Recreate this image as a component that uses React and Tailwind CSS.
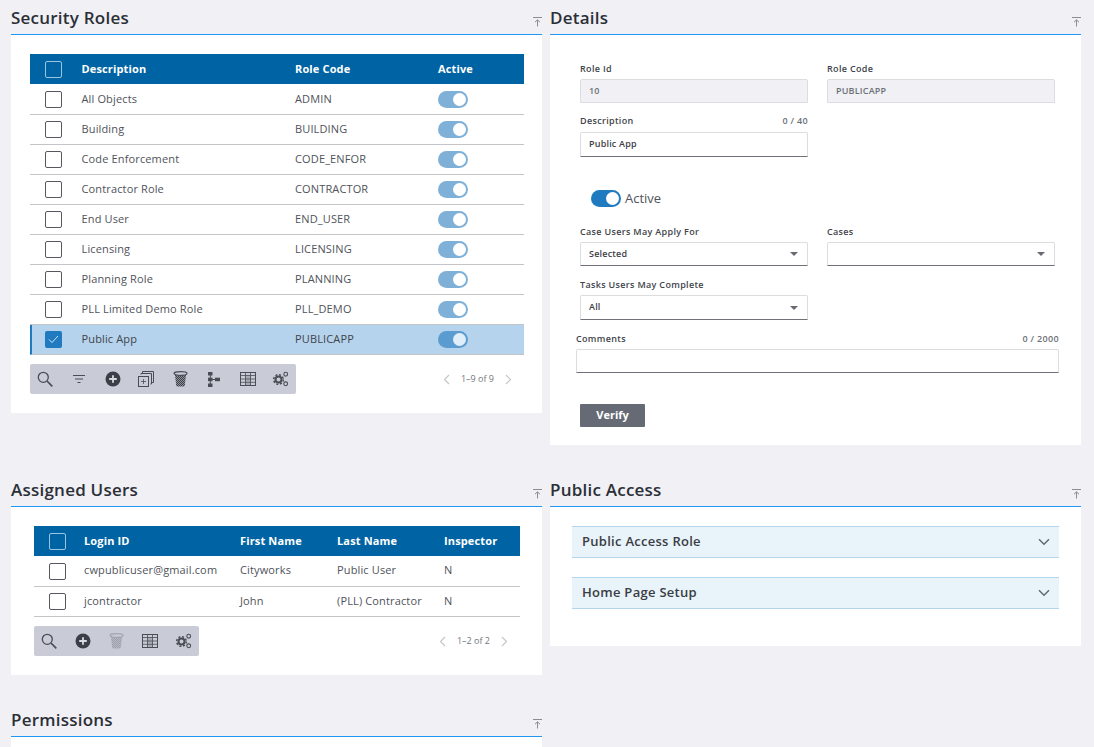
const roles = [
  ["All Objects", "ADMIN"],
  ["Building", "BUILDING"],
  ["Code Enforcement", "CODE_ENFOR"],
  ["Contractor Role", "CONTRACTOR"],
  ["End User", "END_USER"],
  ["Licensing", "LICENSING"],
  ["Planning Role", "PLANNING"],
  ["PLL Limited Demo Role", "PLL_DEMO"],
];
const users = [
  ["cwpublicuser@gmail.com", "Cityworks", "Public User", "N"],
  ["jcontractor", "John", "(PLL) Contractor", "N"],
];

const Collapse = () => (
  <svg width="9" height="10" viewBox="0 0 9 10" fill="none" stroke="#8a8d96" strokeWidth="1" className="mt-[9px]">
    <path d="M0 .5H9M4.5 9.5V3M2 5.2 4.5 2.8 7 5.2" />
  </svg>
);

function Panel({ title, children, className }) {
  return (
    <section className={className}>
      <div className="h-[35px] flex items-center justify-between border-b border-[#2196f3]">
        <h2 className="text-[17px] font-semibold tracking-[0.23px] text-[#2b2f36] leading-none pt-[1px]">{title}</h2>
        <Collapse />
      </div>
      {children}
    </section>
  );
}

function Box({ checked, header }) {
  if (checked)
    return (
      <span className="w-[17px] h-[17px] rounded-[2px] bg-[#1f7ac0] flex items-center justify-center">
        <svg width="11" height="9" viewBox="0 0 11 9" fill="none" stroke="#d5e8f6" strokeWidth="1"><path d="M1 4.5 4 7.5 10 1" /></svg>
      </span>
    );
  return (
    <span className={"w-[17px] h-[17px] rounded-[2px] border " + (header ? "border-[#9cc4e0]" : "border-[#55585f] bg-white")} />
  );
}

function Toggle({ tone = "off" }) {
  const track = tone === "on" ? "bg-[#1f7ac0]" : tone === "sel" ? "bg-[#5b9cd0]" : "bg-[#7fb1d8]";
  const knob = tone === "sel" ? "bg-[#dfeef8]" : "bg-white";
  return (
    <span className={"w-[30px] h-[17px] rounded-full flex items-center justify-end pr-[2px] " + track}>
      <span className={"w-[13px] h-[13px] rounded-full " + knob} />
    </span>
  );
}

const g = "#4a4d55";
const IconSearch = () => (
  <svg width="16" height="16" viewBox="0 0 16 16" fill="none" stroke={g}>
    <circle cx="6.3" cy="6.3" r="5" strokeWidth="1.3" /><path d="M10 10 15.3 15.3" strokeWidth="1.7" />
  </svg>
);
const IconFilter = () => (
  <svg width="12" height="10" viewBox="0 0 12 10" fill="none" stroke={g}>
    <path d="M0 1.5H12M2 5H10M4.5 8.5H7.5" />
  </svg>
);
const IconPlus = () => (
  <svg width="16" height="16" viewBox="0 0 16 16">
    <circle cx="8" cy="8" r="7.5" fill="#3c3f47" /><path d="M8 4.2V11.8M4.2 8H11.8" stroke="#d8dae0" strokeWidth="1.8" />
  </svg>
);
const IconCopy = () => (
  <svg width="16" height="16" viewBox="0 0 16 16" fill="none" stroke={g}>
    <path d="M4.5 2.5V.5H15.5V11.5H13.5" /><path d="M3 3.5V2.5H13.5V13H12.5" />
    <rect x=".5" y="5.5" width="10" height="10" /><path d="M5.5 8V13M3 10.5H8" strokeWidth=".8" />
  </svg>
);
const IconTrash = ({ faded }) => (
  <svg width="15" height="16" viewBox="0 0 15 16" opacity={faded ? 0.3 : 1}>
    <defs>
      <pattern id={faded ? "m2" : "m1"} width="2" height="2" patternUnits="userSpaceOnUse">
        <rect width="2" height="2" fill="#8d9098" /><rect width="1" height="1" fill="#3f4249" /><rect x="1" y="1" width="1" height="1" fill="#3f4249" />
      </pattern>
    </defs>
    <path d="M2 4H13L11.8 14.5Q11.6 15.5 10.5 15.5H4.5Q3.4 15.5 3.2 14.5Z" fill={`url(#${faded ? "m2" : "m1"})`} />
    <ellipse cx="7.5" cy="2.5" rx="6.5" ry="1.8" fill="#c9ccd6" stroke={g} strokeWidth="1.2" />
  </svg>
);
const IconTree = () => (
  <svg width="12" height="15" viewBox="0 0 12 15" fill={g}>
    <rect x="0" y="0" width="4.5" height="3.5" /><rect x="0" y="5.7" width="4.5" height="3.5" /><rect x="0" y="11.5" width="4.5" height="3.5" />
    <rect x="7" y="5.7" width="5" height="3.5" /><path d="M1.8 3H2.8V12H1.8ZM4 7H8V8H4Z" />
  </svg>
);
const IconGrid = () => (
  <svg width="16" height="14" viewBox="0 0 16 14" fill="none" stroke={g}>
    <rect x="5.5" y="3" width="5" height="10.5" fill="#a9acb5" stroke="none" />
    <rect x=".5" y=".5" width="15" height="13" /><path d="M.5 3.5H15.5M.5 7H15.5M.5 10.3H15.5M5.5 .5V13.5M10.5 .5V13.5" strokeWidth=".8" />
  </svg>
);
const IconGears = () => (
  <svg width="16" height="16" viewBox="0 0 16 16" fill="none" stroke={g}>
    <circle cx="5.5" cy="8.5" r="3" strokeWidth="2" />
    <circle cx="5.5" cy="8.5" r="4.8" strokeWidth="1.5" strokeDasharray="2 1.77" />
    <circle cx="12.7" cy="3.2" r="1.9" strokeWidth="1.1" />
    <circle cx="12.7" cy="12.8" r="1.9" strokeWidth="1.1" />
  </svg>
);

function Toolbar({ icons, className }) {
  return (
    <div className={"h-[30px] bg-[#c9ccd6] rounded-[2px] flex items-center pl-[7px] gap-[17.75px] " + className}>
      {icons.map((I, i) => (
        <span key={i} className="w-[16px] flex items-center justify-center">{I}</span>
      ))}
    </div>
  );
}

function Pager({ text }) {
  const c = "#c4c6cc";
  return (
    <div className="flex items-center gap-[11px] text-[9px] text-[#73767e]">
      <svg width="7" height="11" viewBox="0 0 7 11" fill="none" stroke={c} strokeWidth="1.2"><path d="M6 1 1.5 5.5 6 10" /></svg>
      <span>{text}</span>
      <svg width="7" height="11" viewBox="0 0 7 11" fill="none" stroke={c} strokeWidth="1.2"><path d="M1 1 5.5 5.5 1 10" /></svg>
    </div>
  );
}

function Label({ children, count, className = "" }) {
  return (
    <div className={"flex justify-between items-center h-[12px] text-[9px] font-semibold text-[#41444b] tracking-[0.33px] " + className}>
      <span>{children}</span>
      {count && <span className="font-semibold text-[#6d7077]">{count}</span>}
    </div>
  );
}

function Field({ value, disabled, select, tall, className = "" }) {
  return (
    <div className={"flex items-center justify-between px-[8px] rounded-t-[2px] border border-[#dcdde1] text-[9px] font-semibold tracking-[0.2px] " +
      (tall ? "h-[25px] " : "h-[24px] ") +
      (disabled ? "bg-[#f0f0f5] border-[#d2d3d8] text-[#6d7077] font-normal " : "bg-white border-b-[#6f7278] text-[#3d4047] ") + className}>
      <span className={tall ? "-mt-[2px]" : ""}>{value}</span>
      {select && <span className="mr-[1px] w-0 h-0 border-x-[4px] border-x-transparent border-t-[4px] border-t-[#666a72]" />}
    </div>
  );
}

function Chevron() {
  return (
    <svg width="12" height="8" viewBox="0 0 12 8" fill="none" stroke="#5f6a75" strokeWidth="1.5"><path d="M1 1.2 6 6.2 11 1.2" /></svg>
  );
}

export default function App() {
  return (
    <div className="h-[747px] overflow-hidden bg-[#f0f0f5] flex gap-[8px] pl-[11px] text-[#50535a]" style={{ fontFamily: '"Open Sans", sans-serif' }}>
      <div className="w-[531px] shrink-0">
        <Panel title="Security Roles" className="mb-[59px]">
          <div className="bg-white h-[378px] pt-[19px] pl-[19px] pr-[18px]">
            <div className="h-[30px] mb-[1px] bg-[#0064a4] flex items-center text-white text-[11px] font-bold tracking-[0.14px]">
              <span className="w-[51px] pl-[15px] flex"><Box header /></span>
              <span className="w-[214px] pl-[0.5px]">Description</span>
              <span className="w-[143px]">Role Code</span>
              <span>Active</span>
            </div>
            {roles.map(([d, c]) => (
              <div key={c} className="h-[30px] flex items-center border-b border-[#c4c5c9] text-[11px] tracking-[0.14px]">
                <span className="w-[51px] pl-[15px] flex"><Box /></span>
                <span className="w-[214px] pl-[0.5px]">{d}</span>
                <span className="w-[143px]">{c}</span>
                <Toggle />
              </div>
            ))}
            <div className="h-[30px] flex items-center bg-[#b5d3ec] border-l-2 border-l-[#1f7ac0] border-b border-b-[#c4c5c9] text-[11px] tracking-[0.14px] text-[#41444b]">
              <span className="w-[49px] pl-[13px] flex"><Box checked /></span>
              <span className="w-[214px] pl-[0.5px]">Public App</span>
              <span className="w-[143px]">PUBLICAPP</span>
              <Toggle tone="sel" />
            </div>
            <div className="mt-[9px] flex items-center justify-between pr-[12px]">
              <Toolbar className="w-[266px]" icons={[<IconSearch />, <IconFilter />, <IconPlus />, <IconCopy />, <IconTrash />, <IconTree />, <IconGrid />, <IconGears />]} />
              <Pager text="1–9 of 9" />
            </div>
          </div>
        </Panel>

        <Panel title="Assigned Users" className="mb-[27px]">
          <div className="bg-white h-[168px] pt-[19px] pl-[23px] pr-[22px]">
            <div className="h-[30px] mb-[1px] bg-[#0064a4] flex items-center text-white text-[11px] font-bold tracking-[0.14px]">
              <span className="w-[50px] pl-[15px] flex"><Box header /></span>
              <span className="w-[156px]">Login ID</span>
              <span className="w-[97px]">First Name</span>
              <span className="w-[107px]">Last Name</span>
              <span>Inspector</span>
            </div>
            {users.map(([a, b, c, d], i) => {
              const lift = i === 0 ? "-mt-[2px]" : "";
              return (
                <div key={a} className="h-[30px] flex items-center border-b border-[#c4c5c9] text-[11px] tracking-[0.14px]">
                  <span className="w-[50px] pl-[15px] flex"><Box /></span>
                  <span className={"w-[156px] " + lift}>{a}</span>
                  <span className={"w-[97px] " + lift}>{b}</span>
                  <span className={"w-[107px] " + lift}>{c}</span>
                  <span className={lift}>{d}</span>
                </div>
              );
            })}
            <div className="mt-[9px] flex items-center justify-between pr-[12px]">
              <Toolbar className="w-[165px]" icons={[<IconSearch />, <IconPlus />, <IconTrash faded />, <IconGrid />, <IconGears />]} />
              <Pager text="1–2 of 2" />
            </div>
          </div>
        </Panel>

        <Panel title="Permissions">
          <div className="bg-white h-[200px]" />
        </Panel>
      </div>

      <div className="w-[531px] shrink-0">
        <Panel title="Details" className="mb-[27px]">
          <div className="bg-white h-[410px] pt-[28px] pl-[30px] pr-[26px]">
            <div className="grid grid-cols-[228px_228px] gap-x-[19px]">
              <div>
                <Label className="mb-[4px]">Role Id</Label>
                <Field value="10" disabled />
              </div>
              <div>
                <Label className="mb-[4px]">Role Code</Label>
                <Field value="PUBLICAPP" disabled />
              </div>
              <div className="mt-[12px]">
                <Label className="mb-[5px]" count="0 / 40">Description</Label>
                <Field value="Public App" tall />
              </div>
            </div>
            <div className="mt-[33px] ml-[11px] flex items-center gap-[4px] h-[17px] text-[13px] text-[#50535a]">
              <Toggle tone="on" /> <span>Active</span>
            </div>
            <div className="grid grid-cols-[228px_228px] gap-x-[19px] mt-[19px]">
              <div>
                <Label className="mb-[4px]">Case Users May Apply For</Label>
                <Field value="Selected" select />
              </div>
              <div>
                <Label className="mb-[4px]">Cases</Label>
                <Field value="" select />
              </div>
              <div className="mt-[13px]">
                <Label className="mb-[4px]">Tasks Users May Complete</Label>
                <Field value="All" select tall />
              </div>
            </div>
            <div className="-ml-[4px] mr-[-4px] mt-[13px]">
              <Label className="mb-[4px]" count="0 / 2000">Comments</Label>
              <Field value="" />
            </div>
            <div className="mt-[31px] w-[65px] h-[23px] rounded-[1px] bg-[#666a75] text-white text-[11px] font-bold flex items-center justify-center">Verify</div>
          </div>
        </Panel>

        <Panel title="Public Access">
          <div className="bg-white h-[139px] pt-[19px] pl-[22px] pr-[22px] flex flex-col gap-[19px]">
            {["Public Access Role", "Home Page Setup"].map((t) => (
              <div key={t} className="h-[32px] bg-[#e8f3fa] border-y border-[#b5d5ec] flex items-center justify-between pl-[10px] pr-[9px] text-[13px] font-semibold tracking-[0.28px] text-[#3a3d44]">
                <span>{t}</span>
                <Chevron />
              </div>
            ))}
          </div>
        </Panel>
      </div>
    </div>
  );
}
